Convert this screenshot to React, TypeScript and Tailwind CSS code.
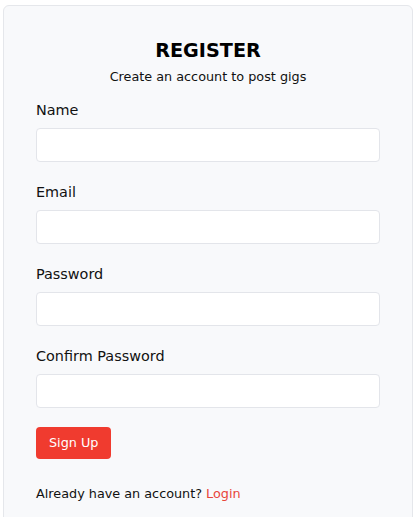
const FIELDS = [
  { label: 'Name', type: 'text' },
  { label: 'Email', type: 'email' },
  { label: 'Password', type: 'password' },
  { label: 'Confirm Password', type: 'password' },
] as const;

export default function App() {
  return (
    <div className="min-h-screen bg-white pt-[5px] pl-[3px] pr-[1px] font-['DejaVu_Sans',sans-serif] text-[#111]">
      <div className="rounded-md border border-[#e5e7eb] bg-[#f8f9fb] px-8 pt-[33px] pb-8">
        <h2 className="mb-[5px] text-center text-[19.2px] leading-6 font-bold text-black">
          REGISTER
        </h2>
        <p className="text-center text-[12.8px] leading-[18px] text-[#111]">
          Create an account to post gigs
        </p>
        <form className="mt-[14px]" onSubmit={(e) => e.preventDefault()}>
          {FIELDS.map(({ label, type }) => (
            <div key={label} className="mb-5">
              <label className="mb-2 block text-[14.4px] leading-5 text-[#111]">
                {label}
              </label>
              <input
                type={type}
                className="block h-[34px] w-full rounded border border-[#e3e5ea] bg-white px-2 text-sm outline-none"
              />
            </div>
          ))}
          <button
            type="submit"
            className="-mt-px flex h-8 items-center rounded-[4px] bg-[#f03b2f] px-[13px] text-[12.8px] text-white"
          >
            Sign Up
          </button>
        </form>
        <p className="mt-[26px] text-[12.8px] leading-[18px] text-[#111]">
          Already have an account?{' '}
          <a href="#" className="text-[#e8453a]">
            Login
          </a>
        </p>
      </div>
    </div>
  );
}
